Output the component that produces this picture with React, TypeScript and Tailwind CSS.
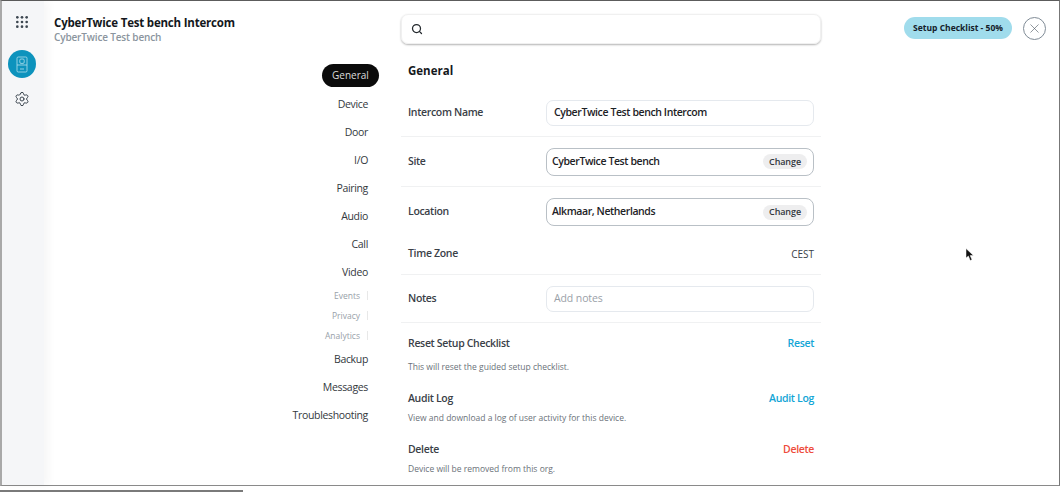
import { Search, Settings, X } from 'lucide-react';

const navItems = ['Device', 'Door', 'I/O', 'Pairing', 'Audio', 'Call', 'Video'];
const subItems = ['Events', 'Privacy', 'Analytics'];
const navBottom = ['Backup', 'Messages', 'Troubleshooting'];

function NavLink({ label }: { label: string }) {
  return <div className="h-[28px] flex items-center justify-end pr-[33px] text-[10.5px] tracking-[-0.33px] font-medium text-[#33383d]">{label}</div>;
}

function GridDots() {
  const dots = [3, 9, 15];
  return (
    <svg width="14" height="14" viewBox="0 0 18 18" className="w-[14px] h-[14px]">
      {dots.map((y) => dots.map((x) => <circle key={`${x}-${y}`} cx={x} cy={y} r="1.7" fill="#3c4650" />))}
    </svg>
  );
}

function DeviceIcon() {
  return (
    <svg width="12" height="17" viewBox="0 0 12 17" fill="none" stroke="#b4e0ee" strokeWidth="0.8">
      <rect x="1" y="1" width="10" height="15" rx="1.2" />
      <rect x="3.8" y="3" width="4.4" height="4.4" rx="1.2" />
      <line x1="1" y1="9" x2="11" y2="9" />
      <line x1="4" y1="13" x2="8" y2="13" />
    </svg>
  );
}

function Cursor() {
  return (
    <svg width="10" height="14" viewBox="0 0 10 14" className="absolute left-[965px] top-[248px]">
      <path d="M1 0.5 L1 10 L3.4 8 L5.2 12.6 L7 11.8 L5.2 7.6 L8.4 7.4 Z" fill="#111" stroke="#fff" strokeWidth="0.5" />
    </svg>
  );
}

function Row({ label, className, children }: { label: string; className: string; children?: React.ReactNode }) {
  return (
    <div className={`flex items-center justify-between px-[7px] ${className}`}>
      <span className="text-[10.5px] tracking-[-0.33px] font-semibold text-[#3a4047]">{label}</span>
      {children}
    </div>
  );
}

function PickerField({ value }: { value: string }) {
  return (
    <div className="w-[268px] h-[28px] flex items-center justify-between pl-[5px] pr-[6px] rounded-[8px] border border-[#b9c0c6]">
      <span className="text-[10.5px] tracking-[-0.4px] font-semibold text-[#1d2226]">{value}</span>
      <span className="h-[15px] w-[44px] flex items-center justify-center rounded-full bg-[#eeeeef] text-[9px] tracking-[-0.1px] font-semibold text-[#33383d]">Change</span>
    </div>
  );
}

function ActionRow({ label, action, color, className }: { label: string; action: string; color: string; className: string }) {
  return (
    <div className={`px-[7px] ${className}`}>
      <div className="flex items-center justify-between h-[16px]">
        <span className="text-[10.5px] tracking-[-0.33px] font-semibold text-[#3a4047]">{label}</span>
        <span className={`text-[10.5px] tracking-[-0.33px] font-semibold ${color}`}>{action}</span>
      </div>
    </div>
  );
}

export default function App() {
  return (
    <div className="relative w-[1060px] h-[492px] bg-white overflow-hidden font-['Open_Sans','Noto_Sans',sans-serif]">
      <div className="h-[486px] flex border-t border-t-[#5c5c5c] border-b border-b-[#8a8a8a] border-l-2 border-l-[#a9a9a9] border-r border-r-[#777777]">
        <aside className="w-[42px] shrink-0 flex flex-col items-center bg-[#f5f6f8] shadow-[5px_0_8px_rgba(0,0,0,0.035)]">
          <div className="mt-[14px] ml-[-2px]"><GridDots /></div>
          <div className="mt-[21px] ml-[-2px] w-[28px] h-[28px] rounded-full bg-[#0d93bd] flex items-center justify-center"><DeviceIcon /></div>
          <Settings className="mt-[13px] ml-[-2px] w-[16px] h-[16px] text-[#3c4650]" strokeWidth={1.5} />
        </aside>

        <main className="flex-1 min-w-0">
          <header className="flex h-[63px]">
            <div className="w-[357px] shrink-0 pl-[10px] pt-[14px]">
              <div className="text-[11.5px] tracking-[-0.2px] leading-[15px] font-bold text-[#14181c]">CyberTwice Test bench Intercom</div>
              <div className="text-[10px] tracking-[-0.15px] leading-[14px] font-semibold text-[#8b959e]">CyberTwice Test bench</div>
            </div>
            <div className="w-[420px] shrink-0 h-[30px] mt-[13px] flex items-center pl-[9px] rounded-[7px] border border-[#f0f0f0] shadow-[0_1px_2px_rgba(0,0,0,0.3)]">
              <Search className="w-[12px] h-[12px] text-[#23282d]" strokeWidth={2.5} />
            </div>
            <div className="flex-1 flex items-start justify-end gap-[11px] pr-[13px] pt-[16px]">
              <div className="h-[22px] w-[108px] flex items-center justify-center rounded-full bg-[#a0dcec] text-[8.5px] font-bold text-[#14202a]">Setup Checklist - 50%</div>
              <div className="w-[23px] h-[23px] rounded-full border border-[#7f8b96] flex items-center justify-center">
                <X className="w-[15px] h-[15px] text-[#4f5a64]" strokeWidth={1} />
              </div>
            </div>
          </header>

          <div className="flex">
            <nav className="w-[357px] shrink-0 pr-0">
              <div className="h-[27px] flex items-start justify-end pr-[22px]">
                <span className="w-[57px] h-[23px] rounded-full bg-[#0b0b0b] text-[#dddddd] text-[10px] flex items-center justify-center">General</span>
              </div>
              {navItems.map((item) => <NavLink key={item} label={item} />)}
              <div className="mt-[-2px] mb-[1px]">
                {subItems.map((item) => (
                  <div key={item} className="h-[20px] flex items-center justify-end pr-[33px]">
                    <span className="text-[8.5px] text-[#98a1a9] pr-[7px] border-r border-r-[#e8e8e8] leading-[9px]">{item}</span>
                  </div>
                ))}
              </div>
              {navBottom.map((item) => <NavLink key={item} label={item} />)}
            </nav>

            <section className="w-[420px] shrink-0 mt-[-3px]">
              <h2 className="px-[7px] h-[20px] flex items-center text-[11.5px] font-bold text-[#14181c]">General</h2>
              <Row label="Intercom Name" className="h-[56px] pt-[8px] border-b border-b-[#f0f1f2]">
                <div className="w-[268px] h-[26px] flex items-center px-[7px] rounded-[7px] border border-[#e5e9ee] text-[10.5px] tracking-[-0.4px] font-semibold text-[#1d2226]">CyberTwice Test bench Intercom</div>
              </Row>
              <Row label="Site" className="h-[50px] border-b border-b-[#f0f1f2]"><PickerField value="CyberTwice Test bench" /></Row>
              <Row label="Location" className="h-[50px]"><PickerField value="Alkmaar, Netherlands" /></Row>
              <Row label="Time Zone" className="h-[38px] pb-[3px] border-b border-b-[#f0f1f2]">
                <span className="text-[10px] text-[#3a4047]">CEST</span>
              </Row>
              <Row label="Notes" className="h-[48px] border-b border-b-[#f0f1f2]">
                <div className="w-[268px] h-[26px] flex items-center px-[7px] rounded-[7px] border border-[#e5e9ee] text-[10.5px] tracking-[-0.1px] text-[#9aa1a8]">Add notes</div>
              </Row>
              <ActionRow className="pt-[13px]" label="Reset Setup Checklist" action="Reset" color="text-[#12a5d6]" />
              <p className="px-[7px] mt-[7px] h-[16px] leading-[16px] text-[8.5px] text-[#6b7279]">This will reset the guided setup checklist.</p>
              <ActionRow className="pt-[16px]" label="Audit Log" action="Audit Log" color="text-[#12a5d6]" />
              <p className="px-[7px] mt-[3px] h-[16px] leading-[16px] text-[8.5px] text-[#6b7279]">View and download a log of user activity for this device.</p>
              <ActionRow className="pt-[16px]" label="Delete" action="Delete" color="text-[#ee4b3c]" />
              <p className="px-[7px] mt-[3px] h-[16px] leading-[16px] text-[8.5px] text-[#6b7279]">Device will be removed from this org.</p>
            </section>
          </div>
        </main>
      </div>
      <div className="mt-[4px] w-[243px] h-[2px] bg-[#7a7a7a]" />
      <Cursor />
    </div>
  );
}
